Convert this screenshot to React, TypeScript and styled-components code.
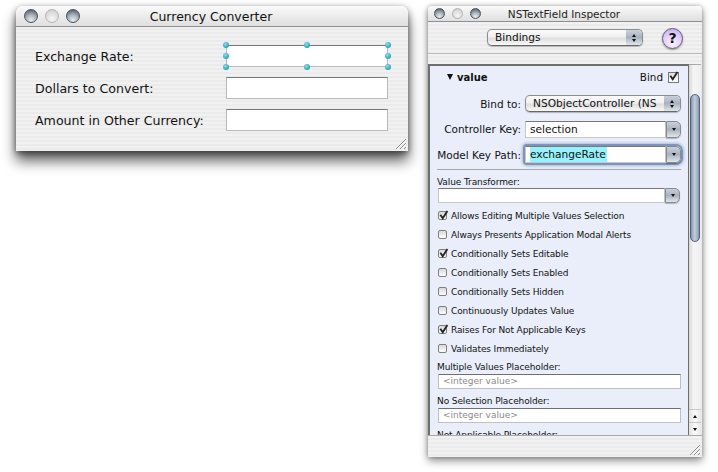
import React from 'react'
import styled, { createGlobalStyle } from 'styled-components'

const Global = createGlobalStyle`
html, body {
  margin: 0;
  padding: 0;
  background: #fff;
}
body {
  font-family: "DejaVu Sans", "Liberation Sans", sans-serif;
  color: #111;
}
`

const pinstripe = `repeating-linear-gradient(180deg, #f1f1f1 0 2px, #ebebeb 2px 4px)`

const Grip = () => (
  <GripSvg viewBox="0 0 12 12">
    <path d="M1 11 L11 1 M5 11 L11 5 M9 11 L11 9" stroke="#8a8a8a" strokeWidth="1" fill="none" />
    <path d="M2 11 L11 2 M6 11 L11 6" stroke="#fff" strokeWidth="0.8" fill="none" />
  </GripSvg>
)

const Tick = () => (
  <TickSvg viewBox="0 0 14 13">
    <path d="M3 5.5 L6 10 L12 0.8" stroke="#222" strokeWidth="2.3" fill="none" />
  </TickSvg>
)

const Lights = ({ small, x }: { small?: boolean; x: number }) => (
  <LightRow style={{ marginLeft: x }}>
    <Light $small={small} />
    <Light $small={small} $off />
    <Light $small={small} />
  </LightRow>
)

const Popup = ({ text, w }: { text: string; w: number }) => (
  <PopupBox style={{ width: w }}>
    <PopupText>{text}</PopupText>
    <PopupArrows>
      <ArrowUp />
      <ArrowDown />
    </PopupArrows>
  </PopupBox>
)

const Combo = ({ children, focused, w, h }: { children?: React.ReactNode; focused?: boolean; w: number; h?: number }) => (
  <ComboBox $focused={focused} $h={h} style={{ width: w }}>
    <ComboField>{children}</ComboField>
    <ComboBtn>
      <ArrowDown />
    </ComboBtn>
  </ComboBox>
)

const Check = ({ on, label }: { on?: boolean; label: string }) => (
  <CheckRow>
    <CheckBox>{on && <Tick />}</CheckBox>
    <span>{label}</span>
  </CheckRow>
)

const App = () => {
  return (
    <Desk>
      <Global />
      <Converter>
        <TitleBar>
          <Lights x={8} />
          <Title>Currency Converter</Title>
        </TitleBar>
        <FormBody>
          <FormGrid>
            <FormLabel>Exchange Rate:</FormLabel>
            <FieldWrap>
              <TextField />
              <Handle $x="0%" $y="0%" />
              <Handle $x="50%" $y="0%" />
              <Handle $x="100%" $y="0%" />
              <Handle $x="0%" $y="50%" />
              <Handle $x="100%" $y="50%" />
              <Handle $x="0%" $y="100%" />
              <Handle $x="50%" $y="100%" />
              <Handle $x="100%" $y="100%" />
            </FieldWrap>
            <FormLabel>Dollars to Convert:</FormLabel>
            <TextField />
            <FormLabel>Amount in Other Currency:</FormLabel>
            <TextField />
          </FormGrid>
        </FormBody>
        <Grip />
      </Converter>

      <Inspector>
        <SmallTitleBar>
          <Lights small x={6} />
          <SmallTitle>NSTextField Inspector</SmallTitle>
        </SmallTitleBar>
        <Toolbar>
          <Popup text="Bindings" w={156} />
          <HelpBtn>?</HelpBtn>
        </Toolbar>
        <Strip />
        <Panel>
          <Content>
            <ValueHead>
              <ValueName>
                <Disclosure />
                value
              </ValueName>
              <BindWrap>
                Bind
                <BindBox>
                  <Tick />
                </BindBox>
              </BindWrap>
            </ValueHead>
            <KeyRows>
              <KeyLabel>Bind to:</KeyLabel>
              <Popup text="NSObjectController (NS" w={156} />
              <KeyLabel>Controller Key:</KeyLabel>
              <Combo w={156}>selection</Combo>
              <KeyLabel>Model Key Path:</KeyLabel>
              <Combo w={156} focused>
                <Selected>exchangeRate</Selected>
              </Combo>
            </KeyRows>
            <Rule />
            <SmallLabel>Value Transformer:</SmallLabel>
            <Combo w={242} h={15} />
            <Checks>
              <Check on label="Allows Editing Multiple Values Selection" />
              <Check label="Always Presents Application Modal Alerts" />
              <Check on label="Conditionally Sets Editable" />
              <Check label="Conditionally Sets Enabled" />
              <Check label="Conditionally Sets Hidden" />
              <Check label="Continuously Updates Value" />
              <Check on label="Raises For Not Applicable Keys" />
              <Check label="Validates Immediately" />
            </Checks>
            <SmallLabel>Multiple Values Placeholder:</SmallLabel>
            <PlaceField>&lt;integer value&gt;</PlaceField>
            <SmallLabel $top={6}>No Selection Placeholder:</SmallLabel>
            <PlaceField>&lt;integer value&gt;</PlaceField>
            <SmallLabel $top={6}>Not Applicable Placeholder:</SmallLabel>
          </Content>
          <ScrollBar>
            <TrackTop />
            <Thumb />
            <TrackRest />
            <ScrollBtn>
              <SmallUp />
            </ScrollBtn>
            <ScrollBtn>
              <SmallDown />
            </ScrollBtn>
          </ScrollBar>
        </Panel>
        <BottomBar>
          <Grip />
        </BottomBar>
      </Inspector>
    </Desk>
  )
}

const Desk = styled.div`
width: 718px;
height: 472px;
box-sizing: border-box;
padding: 6px 0 0 16px;
display: flex;
align-items: flex-start;
gap: 20px;
overflow: hidden;
background: #fff;
`
const Converter = styled.div`
position: relative;
width: 392px;
height: 145px;
flex: none;
border-radius: 7px 7px 0 0;
background: ${pinstripe};
box-shadow: 0 10px 14px rgba(0,0,0,.62), 0 2px 6px rgba(0,0,0,.5);
`
const TitleBar = styled.div`
position: relative;
height: 21px;
display: flex;
align-items: center;
box-sizing: border-box;
border-bottom: 1px solid #8f8f8f;
border-radius: 7px 7px 0 0;
background: linear-gradient(180deg, #fafafa 0%, #ececec 50%, #dfdfdf 100%);
`
const Title = styled.div`
position: absolute;
left: 0;
right: 0;
top: 3px;
padding-right: 2px;
text-align: center;
font-size: 12.5px;
line-height: 15px;
color: #111;
`
const SmallTitleBar = styled(TitleBar)`
height: 16px;
border-radius: 4px 4px 0 0;
`
const SmallTitle = styled.div`
position: absolute;
left: 0;
right: 0;
top: 1px;
padding-right: 2px;
text-align: center;
font-size: 10.5px;
line-height: 14px;
color: #222;
`
const LightRow = styled.div`
display: flex;
gap: 7px;
`
const Light = styled.div<{ $small?: boolean; $off?: boolean }>`
width: ${({ $small }) => ($small ? '11px' : '14px')};
height: ${({ $small }) => ($small ? '11px' : '14px')};
border-radius: 50%;
box-sizing: border-box;
border: 1px solid ${({ $off }) => ($off ? '#b4b4b4' : '#4d535b')};
background: ${({ $off }) =>
  $off
    ? 'radial-gradient(circle at 50% 75%, #f6f6f6, #d8d8d8 70%, #bdbdbd)'
    : 'radial-gradient(circle at 50% 85%, #e8edf2 0%, #a9b4bf 45%, #5f6975 85%)'};
`
const FormBody = styled.div`
padding: 18px 20px 0 19px;
`
const FormGrid = styled.div`
display: grid;
grid-template-columns: 191px 162px;
grid-auto-rows: 22px;
row-gap: 10px;
align-items: center;
`
const FormLabel = styled.div`
font-size: 12.6px;
color: #111;
`
const FieldWrap = styled.div`
position: relative;
height: 22px;
`
const TextField = styled.div`
height: 22px;
box-sizing: border-box;
background: #fff;
border: 1px solid #b9b9b9;
border-top: 1px solid #777;
`
const Handle = styled.div<{ $x: string; $y: string }>`
position: absolute;
left: ${({ $x }) => $x};
top: ${({ $y }) => $y};
width: 6px;
height: 6px;
margin: -3px 0 0 -3px;
border-radius: 50%;
background: radial-gradient(circle at 40% 35%, #8fe0ea, #28a0b8 70%);
`
const GripSvg = styled.svg`
position: absolute;
right: 1px;
bottom: 1px;
width: 12px;
height: 12px;
`
const TickSvg = styled.svg`
position: absolute;
left: -1px;
top: -2px;
width: 11px;
height: 11px;
`
const Inspector = styled.div`
width: 274px;
height: 451px;
flex: none;
display: flex;
flex-direction: column;
background: #ececec;
border-radius: 4px 4px 0 0;
box-shadow: 0 4px 9px rgba(0,0,0,.42), 0 0 4px rgba(0,0,0,.3);
`
const Toolbar = styled.div`
height: 32px;
box-sizing: border-box;
padding: 7px 19px 0 59px;
display: flex;
align-items: flex-start;
justify-content: space-between;
background: ${pinstripe};
border-bottom: 1px solid #bcbcbc;
`
const PopupBox = styled.div`
height: 17px;
box-sizing: border-box;
display: flex;
border: 1px solid #8d8d8d;
border-bottom-color: #666;
border-radius: 5px;
overflow: hidden;
flex: none;
background: linear-gradient(180deg, #fafafa 0%, #f0f0f0 45%, #dedede 55%, #f8f8f8 100%);
box-shadow: 0 1px 1px rgba(0,0,0,.25);
`
const PopupText = styled.div`
flex: 1;
padding-left: 7px;
font-size: 10.6px;
line-height: 15px;
white-space: nowrap;
overflow: hidden;
color: #111;
`
const PopupArrows = styled.div`
width: 16px;
display: flex;
flex-direction: column;
align-items: center;
justify-content: center;
gap: 2px;
background: linear-gradient(180deg, #c9d0da 0%, #a8b2bf 50%, #e0e5eb 100%);
`
const ArrowUp = styled.div`
width: 0;
height: 0;
border-left: 2.5px solid transparent;
border-right: 2.5px solid transparent;
border-bottom: 3px solid #111;
`
const ArrowDown = styled.div`
width: 0;
height: 0;
border-left: 2.5px solid transparent;
border-right: 2.5px solid transparent;
border-top: 3px solid #111;
`
const HelpBtn = styled.div`
width: 21px;
height: 21px;
margin-top: -1px;
box-sizing: border-box;
border-radius: 50%;
border: 1px solid #5f5c78;
background: radial-gradient(circle at 50% 75%, #fbf3ff 0%, #e0ccfa 55%, #b89ee6 100%);
box-shadow: 0 1px 2px rgba(0,0,0,.4);
text-align: center;
font-size: 14px;
line-height: 19px;
font-weight: 700;
color: #111;
`
const Strip = styled.div`
height: 10px;
background: ${pinstripe};
`
const Panel = styled.div`
flex: 1;
min-height: 0;
display: flex;
margin: 0 1px 0 0;
overflow: hidden;
`
const Content = styled.div`
width: 261px;
box-sizing: border-box;
flex: none;
padding: 3px 0 0 8px;
border: 1px solid #6f6f6f;
border-width: 2px 1px 0 2px;
background: #e9eefa;
overflow: hidden;
`
const ValueHead = styled.div`
height: 16px;
display: flex;
align-items: center;
justify-content: space-between;
padding: 0 9px 0 9px;
`
const ValueName = styled.div`
display: flex;
align-items: center;
gap: 4px;
font-size: 10px;
font-weight: 700;
color: #111;
`
const Disclosure = styled.div`
width: 0;
height: 0;
border-left: 3.5px solid transparent;
border-right: 3.5px solid transparent;
border-top: 6px solid #111;
`
const BindWrap = styled.div`
display: flex;
align-items: center;
gap: 5px;
font-size: 10.4px;
`
const BindBox = styled.div`
position: relative;
width: 11px;
height: 11px;
box-sizing: border-box;
border: 1px solid #777;
background: linear-gradient(180deg, #ddd, #fff);
`
const KeyRows = styled.div`
margin-top: 10px;
margin-left: -2px;
display: grid;
grid-template-columns: 85px 156px;
grid-auto-rows: 17px;
row-gap: 8.5px;
column-gap: 4px;
align-items: center;
`
const KeyLabel = styled.div`
text-align: right;
font-size: 10.5px;
white-space: nowrap;
color: #111;
`
const ComboBox = styled.div<{ $focused?: boolean; $h?: number }>`
height: ${({ $h }) => $h ?? 17}px;
display: flex;
flex: none;
box-sizing: border-box;
background: #fff;
box-shadow: ${({ $focused }) => ($focused ? '0 0 0 2px #7d95b8, 0 0 3px 3px rgba(90,120,170,.45)' : 'none')};
border-radius: 2px 5px 5px 2px;
`
const ComboField = styled.div`
flex: 1;
padding-left: 4px;
box-sizing: border-box;
border: 1px solid #c6c6c6;
border-top-color: #777;
font-size: 10.6px;
line-height: 15px;
background: #fff;
color: #111;
`
const Selected = styled.span`
display: inline-block;
background: #96f2fc;
padding-right: 1px;
`
const ComboBtn = styled.div`
width: 15px;
flex: none;
box-sizing: border-box;
display: flex;
align-items: center;
justify-content: center;
border: 1px solid #8a8a8a;
border-radius: 0 5px 5px 0;
background: linear-gradient(180deg, #c9d0da 0%, #a8b2bf 50%, #e0e5eb 100%);
box-shadow: 0 1px 1px rgba(0,0,0,.25);
`
const Rule = styled.div`
height: 1px;
margin: 6px 7px 0 -1px;
background: #a8a8a8;
`
const SmallLabel = styled.div<{ $top?: number }>`
height: 12px;
margin-top: ${({ $top }) => $top ?? 6}px;
margin-left: -1px;
font-size: 9px;
line-height: 12px;
letter-spacing: -0.1px;
white-space: nowrap;
color: #111;
`
const Checks = styled.div`
margin-top: 3px;
display: grid;
grid-auto-rows: 19px;
margin-bottom: -3px;
`
const CheckRow = styled.div`
display: flex;
align-items: center;
gap: 4px;
font-size: 9px;
letter-spacing: -0.12px;
white-space: nowrap;
color: #111;
`
const CheckBox = styled.div`
position: relative;
width: 9px;
height: 9px;
box-sizing: border-box;
flex: none;
border: 1px solid #808080;
border-radius: 2px;
background: linear-gradient(180deg, #d8d8d8, #fdfdfd);
`
const PlaceField = styled.div`
width: 243px;
height: 15px;
box-sizing: border-box;
margin-top: 1px;
padding-left: 4px;
border: 1px solid #c0c0c0;
border-top-color: #707070;
background: #fff;
font-size: 9px;
line-height: 13px;
color: #8b8b8b;
`
const ScrollBar = styled.div`
flex: 1;
display: flex;
flex-direction: column;
align-items: stretch;
background: linear-gradient(90deg, #d8d8d8, #f6f6f6 40%, #ededed);
border-top: 1px solid #aaa;
`
const TrackTop = styled.div`
height: 29px;
`
const Thumb = styled.div`
height: 148px;
margin: 0 1px;
border: 1px solid #52647d;
border-radius: 6px;
box-sizing: border-box;
background: linear-gradient(90deg, #7f93ae, #c4cedb 45%, #9fb0c6 80%, #7f93ae);
`
const TrackRest = styled.div`
flex: 1;
`
const ScrollBtn = styled.div`
height: 12px;
display: flex;
align-items: center;
justify-content: center;
background: linear-gradient(90deg, #e2e2e2, #fafafa 50%, #e6e6e6);
border-top: 1px solid #c9c9c9;
`
const SmallUp = styled(ArrowUp)``
const SmallDown = styled(ArrowDown)``
const BottomBar = styled.div`
position: relative;
height: 22px;
flex: none;
box-sizing: border-box;
border-top: 1px solid #a8a8a8;
background: ${pinstripe};
`

export default App
